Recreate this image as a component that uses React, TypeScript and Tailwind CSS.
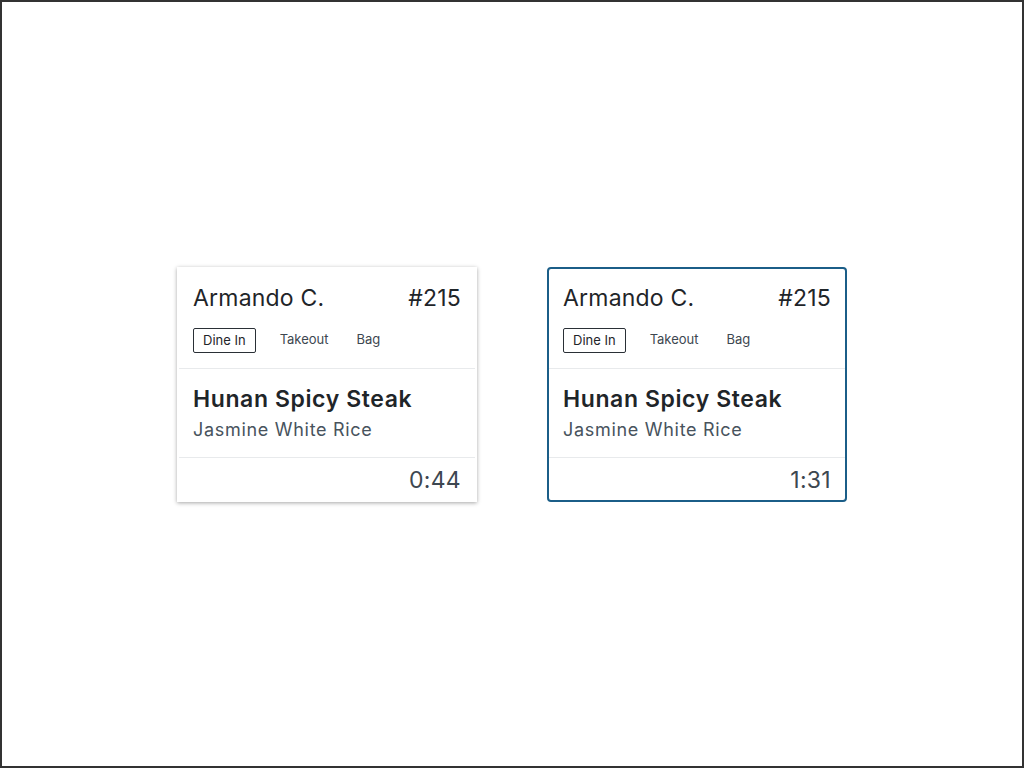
import React from 'react'

interface Ticket {
  name: string
  number: string
  item: string
  side: string
  time: string
  selected?: boolean
}

const tickets: Ticket[] = [
  { name: 'Armando C.', number: '#215', item: 'Hunan Spicy Steak', side: 'Jasmine White Rice', time: '0:44' },
  { name: 'Armando C.', number: '#215', item: 'Hunan Spicy Steak', side: 'Jasmine White Rice', time: '1:31', selected: true },
]

function TicketCard({ ticket }: { ticket: Ticket }) {
  const frame = ticket.selected
    ? 'border-2 border-[#1b5e88] rounded-[4px]'
    : 'border-2 border-transparent shadow-[0_1px_4px_rgba(0,0,0,0.35)]'
  return (
    <div className={`w-[300px] h-[235px] bg-white flex flex-col ${frame}`}>
      <div className="px-[14px] pt-[14px] pb-[15px] border-b border-[#e8eaec]">
        <div className="flex justify-between items-center text-[23px] leading-[30px] tracking-[0.2px] text-[#1f2529]">
          <span>{ticket.name}</span>
          <span>{ticket.number}</span>
        </div>
        <div className="flex items-center mt-[15px] text-[13px] text-[#3d4750]">
          <span className="border border-[#2a3036] rounded-[2px] px-[9px] h-[25px] leading-[23px] text-[#1f2529]">Dine In</span>
          <span className="ml-[24px]">Takeout</span>
          <span className="ml-[28px]">Bag</span>
        </div>
      </div>
      <div className="px-[14px] pt-[14px] pb-[14px] border-b border-[#e8eaec]">
        <div className="text-[23px] leading-[32px] tracking-[0.6px] font-semibold text-[#1f2529]">{ticket.item}</div>
        <div className="mt-[1px] text-[18px] leading-[27px] tracking-[0.7px] text-[#48535d]">{ticket.side}</div>
      </div>
      <div className="flex-1 flex items-center justify-end px-[14px] pt-[4px] text-[23px] tracking-[0.3px] text-[#3d4750]">
        {ticket.time}
      </div>
    </div>
  )
}

export default function App() {
  return (
    <div
      className="w-[1024px] h-[768px] border-2 border-[#333333] bg-white flex items-center justify-center gap-[70px]"
      style={{ fontFamily: 'Inter, Roboto, "Noto Sans", sans-serif' }}
    >
      {tickets.map((t, i) => (
        <TicketCard key={i} ticket={t} />
      ))}
    </div>
  )
}
